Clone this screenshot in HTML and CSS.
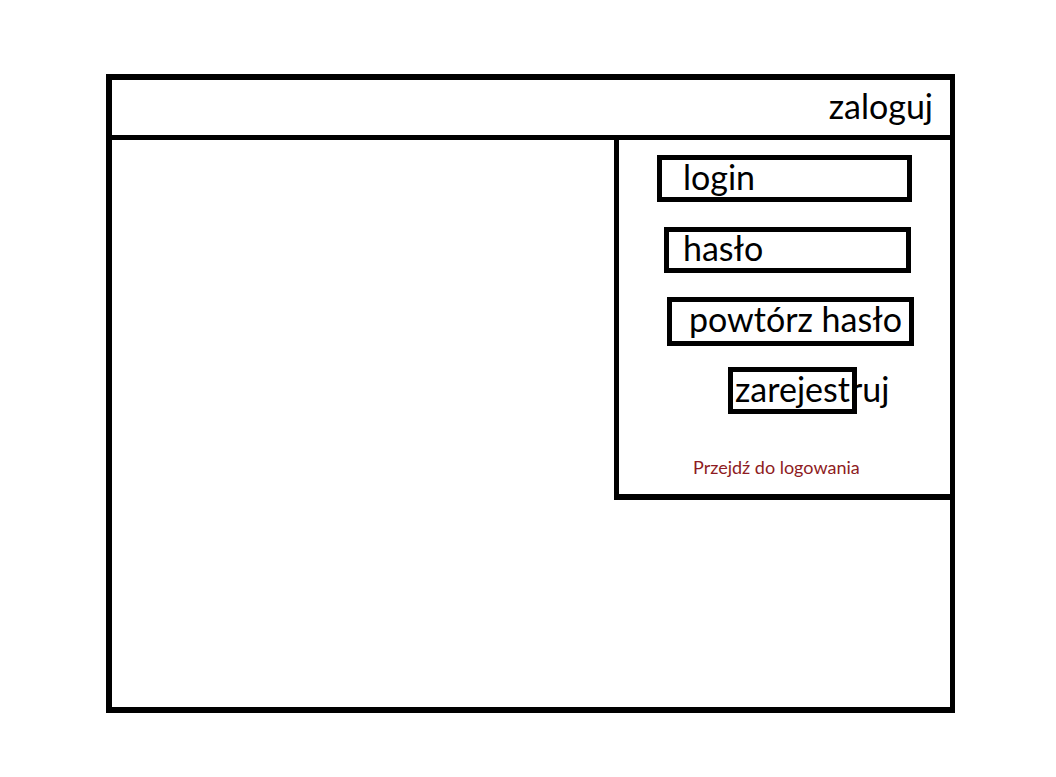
FILE: index.html
```html
<!DOCTYPE html>
<html lang="pl">
<head>
  <meta charset="UTF-8">
  <meta name="viewport" content="width=device-width, initial-scale=1.0">
  <title>Rejestracja</title>
  <link rel="stylesheet" href="styles.css">
</head>
<body>
  <div class="frame">
    <div class="topbar">
      <a class="topbar-link" href="#">zaloguj</a>
    </div>
    <div class="main">
      <div class="content"></div>
      <div class="panel">
        <div class="field field-login">login</div>
        <div class="field field-pass">hasło</div>
        <div class="field field-repeat">powtórz hasło</div>
        <div class="submit">zarejestruj</div>
        <a class="switch-link" href="#">Przejdź do logowania</a>
      </div>
    </div>
  </div>
</body>
</html>
```

FILE: styles.css
```css
body {
  margin: 0;
  padding: 0;
  background: #fff;
  font-family: Lato, "Open Sans", sans-serif;
  color: #000;
}

.frame {
  box-sizing: border-box;
  width: 849px;
  height: 639px;
  margin: 74px 0 0 106px;
  border: 6px solid #000;
  border-right-width: 5px;
  display: flex;
  flex-direction: column;
}

.topbar {
  box-sizing: border-box;
  height: 60px;
  border-bottom: 5px solid #000;
  display: flex;
  justify-content: flex-end;
  align-items: flex-start;
  padding: 13px 17px 0 0;
}

.topbar-link {
  color: #000;
  text-decoration: none;
  font-size: 34px;
  line-height: 26px;
}

.main {
  flex: 1;
  display: flex;
}

.content {
  flex: 1;
}

.panel {
  box-sizing: border-box;
  width: 336px;
  height: 360px;
  border-left: 5px solid #000;
  border-bottom: 6px solid #000;
  display: flex;
  flex-direction: column;
  align-items: flex-start;
  padding-top: 15px;
}

.field {
  box-sizing: border-box;
  border: 5px solid #000;
  font-size: 34px;
  line-height: 26px;
  white-space: nowrap;
}

.field-login {
  width: 255px;
  height: 47px;
  margin-left: 38px;
  padding: 4px 0 0 21px;
}

.field-pass {
  width: 247px;
  height: 46px;
  margin-left: 45px;
  margin-top: 25px;
  padding: 3px 0 0 14px;
}

.field-repeat {
  width: 247px;
  height: 49px;
  margin-left: 48px;
  margin-top: 24px;
  padding: 4px 0 0 17px;
}

.submit {
  box-sizing: border-box;
  width: 129px;
  height: 47px;
  margin-left: 109px;
  margin-top: 21px;
  padding: 4px 0 0 2px;
  border: 5px solid #000;
  font-size: 34px;
  line-height: 26px;
  white-space: nowrap;
}

.switch-link {
  margin-left: 74px;
  margin-top: 42px;
  color: #8e1b22;
  text-decoration: none;
  font-size: 18px;
}
```
